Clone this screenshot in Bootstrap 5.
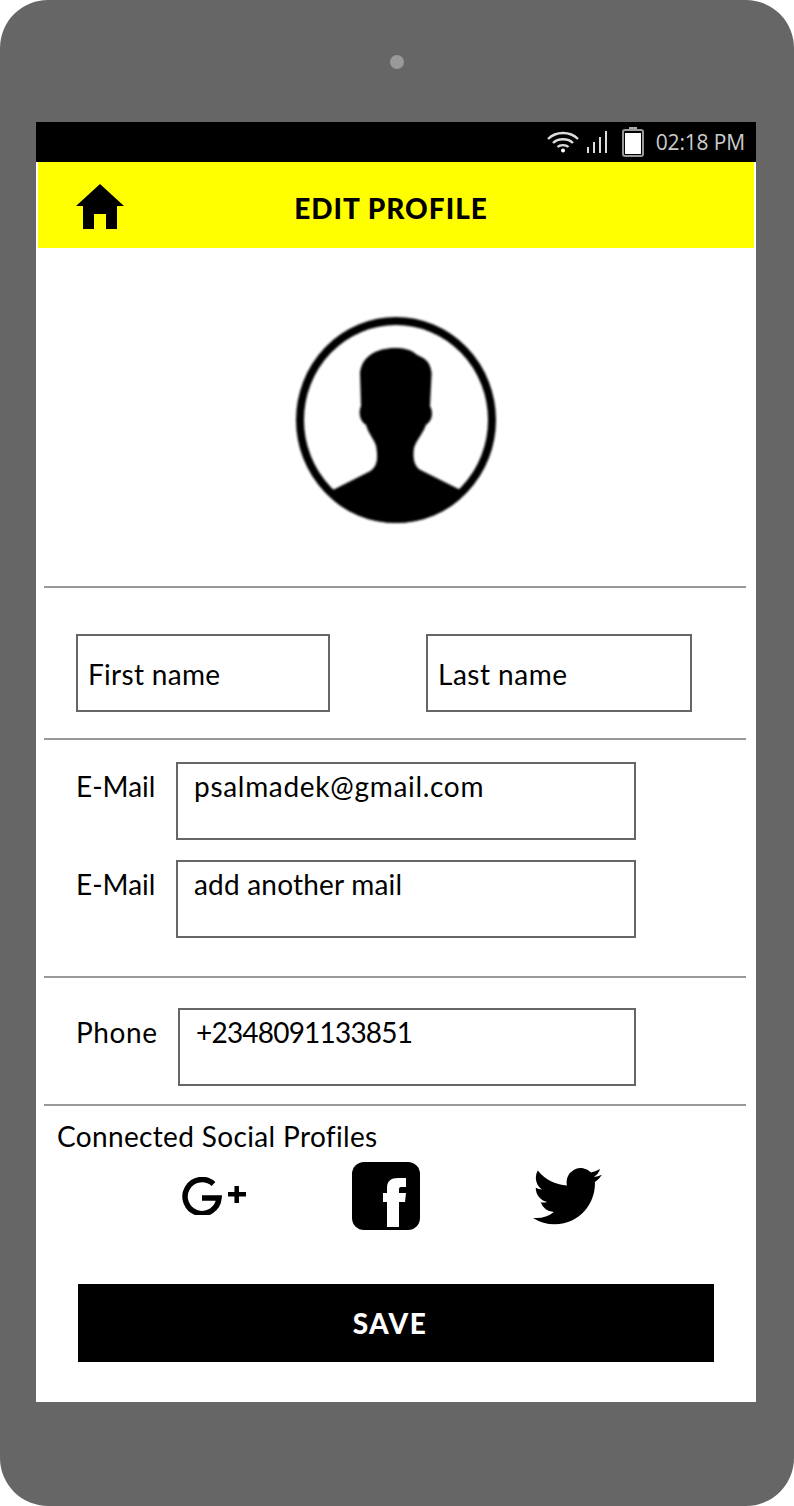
<!DOCTYPE html>
<html lang="en">
<head>
  <meta charset="UTF-8" />
  <meta name="viewport" content="width=device-width, initial-scale=1.0"/>
  <title>Edit Profile</title>
  <link href="https://cdn.jsdelivr.net/npm/bootstrap@5.3.3/dist/css/bootstrap.min.css" rel="stylesheet">
  <style>
    html, body { margin: 0; background: #fff; font-family: "Lato", "Liberation Sans", sans-serif; color: #000; }

    .phone-shell { height: 1506px; padding: 122px 38px 104px 36px; background: #666; border-radius: 48px; position: relative; }
    .phone-cam { position: absolute; left: 390px; top: 55px; width: 14px; height: 14px; border-radius: 50%; background: #999; }
    .phone-screen { height: 1280px; background: #fff; }

    .status-strip { height: 40px; background: #000; padding-right: 11px; color: #ccc; }
    .status-time { font: 21px/1 "Open Sans", sans-serif; letter-spacing: -.15px; margin-left: 12px; }
    .ico-signal { margin-left: 8px; }
    .ico-battery { margin-left: 14px; }

    .title-strip { height: 86px; margin: 0 2px; background: #ff0; padding-left: 38px; }
    .ico-home { margin-top: 3px; }
    .title-text { font-size: 28px; font-weight: 900; letter-spacing: 1px; padding: 6px 96px 0 0; }

    .block { margin: 0 10px 0 8px; border-bottom: 2px solid #999; }
    .block-avatar { height: 340px; padding: 69px 0 0 2px; }
    .block-name { height: 152px; padding: 46px 0 0 32px; gap: 96px; }
    .block-mail { height: 238px; padding: 22px 0 0 32px; gap: 20px; }
    .block-phone { height: 128px; padding: 30px 0 0 32px; }
    .block-social { margin: 0 8px; height: 296px; padding-top: 14px; }

    .avatar-pic { filter: blur(1.2px); }
    .social-ico { filter: blur(.5px); }

    .wire-input.form-control { width: 460px; height: 78px; padding: 4px 16px; border: 2px solid #666; border-radius: 0; background: #fff; color: #000; font-size: 28px; line-height: 36px; letter-spacing: .2px; }
    .wire-input.mail-value { letter-spacing: .7px; }
    .wire-input.name-first { width: 254px; padding: 20px 10px; letter-spacing: .3px; }
    .wire-input.name-last { width: 266px; padding: 20px 10px; letter-spacing: .5px; }
    .wire-input.phone-input { width: 458px; letter-spacing: -.8px; }
    .row-label { width: 100px; font-size: 28px; line-height: 36px; padding-top: 6px; }
    .row-label-phone { width: 102px; letter-spacing: .6px; }

    .social-head { font-size: 28px; line-height: 32px; padding-left: 13px; letter-spacing: .35px; }
    .social-row { height: 68px; margin-top: 10px; padding-left: 138px; }
    .ico-fb { margin-left: 104px; }
    .ico-tw { margin: 2px 0 0 113px; }

    .save-btn.btn { display: block; width: 636px; height: 78px; margin: 54px 0 0 34px; padding: 0 12px 0 0; background: #000; border: 0; border-radius: 0; color: #fff; font-size: 28px; font-weight: 900; letter-spacing: 1.5px; }
  </style>
</head>
<body>
<div class="phone-shell">
  <div class="phone-cam"></div>
  <div class="phone-screen">

    <!-- status bar -->
    <div class="status-strip d-flex align-items-center justify-content-end">
      <svg width="32" height="22" viewBox="0 0 32 22" fill="none" stroke="#ddd" stroke-width="2.4">
        <path d="M1 8C9 0 23 0 31 8"/>
        <path d="M6 12C11 7 21 7 26 12"/>
        <path d="M10.500 16C13 13.500 19 13.500 21.500 16"/>
        <circle cx="16" cy="19.500" r="2" fill="#fff" stroke="none"/>
      </svg>
      <svg class="ico-signal" width="21" height="22" viewBox="0 0 21 22" fill="#ddd">
        <rect x="0" y="16" width="2" height="6"/>
        <rect x="6" y="11" width="2" height="11"/>
        <rect x="12" y="6" width="2" height="16"/>
        <rect x="18" y="0" width="2" height="22"/>
      </svg>
      <svg class="ico-battery" width="22" height="30" viewBox="0 0 22 30">
        <rect x="7" y="0" width="8" height="3" fill="#aaa"/>
        <rect x="1" y="3" width="20" height="26" rx="2" fill="none" stroke="#999" stroke-width="2"/>
        <rect x="3" y="6" width="16" height="21" fill="#fff"/>
      </svg>
      <span class="status-time">02:18 PM</span>
    </div>

    <!-- header -->
    <div class="title-strip d-flex align-items-center">
      <svg class="ico-home" width="48" height="45" viewBox="0 0 48 45">
        <path d="M24 0L48 22H41V45H30V30H18V45H7V22H0Z" fill="#000"/>
      </svg>
      <div class="title-text flex-grow-1 text-center">EDIT PROFILE</div>
    </div>

    <!-- avatar -->
    <div class="block block-avatar d-flex justify-content-center">
      <svg class="avatar-pic" width="200" height="206" viewBox="48 22 600 618">
        <defs>
          <clipPath id="avatarClip"><ellipse cx="348" cy="331" rx="300" ry="309"/></clipPath>
        </defs>
        <ellipse cx="348" cy="331" rx="288" ry="297" fill="#fff" stroke="#000" stroke-width="24"/>
        <path clip-path="url(#avatarClip)" d="M345 115C290 115 245 140 240 190L243 290C235 305 238 335 258 345C265 375 290 395 290 420C293 450 292 468 270 485L160 540V650H540V540L420 480C402 468 398 445 402 415C410 390 430 370 438 345C458 335 460 305 450 290L455 190C450 150 430 145 410 135C395 120 370 115 345 115Z" fill="#000"/>
      </svg>
    </div>

    <!-- name -->
    <div class="block block-name d-flex align-items-start">
      <div class="form-control wire-input name-first">First name</div>
      <div class="form-control wire-input name-last">Last name</div>
    </div>

    <!-- mail -->
    <div class="block block-mail d-flex flex-column">
      <div class="d-flex">
        <div class="row-label">E-Mail</div>
        <div class="form-control wire-input mail-value">psalmadek@gmail.com</div>
      </div>
      <div class="d-flex">
        <div class="row-label">E-Mail</div>
        <div class="form-control wire-input">add another mail</div>
      </div>
    </div>

    <!-- phone -->
    <div class="block block-phone d-flex">
      <div class="row-label row-label-phone">Phone</div>
      <div class="form-control wire-input phone-input">+2348091133851</div>
    </div>

    <!-- social -->
    <div class="block-social">
      <div class="social-head">Connected Social Profiles</div>
      <div class="social-row d-flex align-items-center">
        <svg class="social-ico" width="66" height="38" viewBox="0 0 66 38" fill="none" stroke="#000">
          <path d="M31.500 7A17 17 0 1 0 37 21H20" stroke-width="5.500"/>
          <path d="M46 17.300H64M54.700 9V26" stroke-width="4.500"/>
        </svg>
        <svg class="social-ico ico-fb" width="68" height="68" viewBox="0 0 68 68">
          <rect width="68" height="68" rx="12" fill="#000"/>
          <path d="M35 65V40H31V31H35V26C35 19 39 16 46 16H54V25H49C47.500 25 47 26 47 27.500V31H54L53 40H47V65Z" fill="#fff"/>
        </svg>
        <svg class="social-ico ico-tw" width="69" height="58" viewBox="0 2 16 13.400" preserveAspectRatio="none">
          <path d="M5.026 15c6.038 0 9.341-5.003 9.341-9.334 0-.14 0-.282-.006-.422A6.685 6.685 0 0 0 16 3.542a6.658 6.658 0 0 1-1.889.518 3.301 3.301 0 0 0 1.447-1.817 6.533 6.533 0 0 1-2.087.793A3.286 3.286 0 0 0 7.875 6.030a9.325 9.325 0 0 1-6.767-3.429 3.289 3.289 0 0 0 1.018 4.382A3.323 3.323 0 0 1 .64 6.575v.045a3.288 3.288 0 0 0 2.632 3.218 3.203 3.203 0 0 1-.865.115 3.230 3.230 0 0 1-.614-.057 3.283 3.283 0 0 0 3.067 2.277A6.588 6.588 0 0 1 .78 13.580a6.320 6.320 0 0 1-.78-.045A9.344 9.344 0 0 0 5.026 15z" fill="#000"/>
        </svg>
      </div>
      <button type="button" class="btn save-btn">SAVE</button>
    </div>

  </div>
</div>

<script src="https://cdn.jsdelivr.net/npm/bootstrap@5.3.3/dist/js/bootstrap.bundle.min.js"></script>
</body>
</html>
